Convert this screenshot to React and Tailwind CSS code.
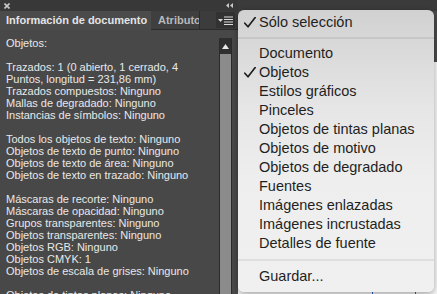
import React from "react";

const lines = [
  "Objetos:",
  "",
  "Trazados: 1 (0 abierto, 1 cerrado, 4",
  "Puntos, longitud = 231,86 mm)",
  "Trazados compuestos: Ninguno",
  "Mallas de degradado: Ninguno",
  "Instancias de símbolos: Ninguno",
  "",
  "Todos los objetos de texto: Ninguno",
  "Objetos de texto de punto: Ninguno",
  "Objetos de texto de área: Ninguno",
  "Objetos de texto en trazado: Ninguno",
  "",
  "Máscaras de recorte: Ninguno",
  "Máscaras de opacidad: Ninguno",
  "Grupos transparentes: Ninguno",
  "Objetos transparentes: Ninguno",
  "Objetos RGB: Ninguno",
  "Objetos CMYK: 1",
  "Objetos de escala de grises: Ninguno",
  "",
  "Objetos de tintas planas: Ninguno",
];

const items = [
  ["Documento", false],
  ["Objetos", true],
  ["Estilos gráficos", false],
  ["Pinceles", false],
  ["Objetos de tintas planas", false],
  ["Objetos de motivo", false],
  ["Objetos de degradado", false],
  ["Fuentes", false],
  ["Imágenes enlazadas", false],
  ["Imágenes incrustadas", false],
  ["Detalles de fuente", false],
];

function Check() {
  return (
    <svg className="absolute left-[6px] top-[4px]" width="12" height="11" viewBox="0 0 12 11">
      <path d="M0.8 6.2 L4 9.8 L11.2 0.6" fill="none" stroke="#1e1e1e" strokeWidth="1.7" strokeLinecap="round" strokeLinejoin="round" />
    </svg>
  );
}

function Item({ label, checked }) {
  return (
    <div className="relative h-[19px] pl-[21px] leading-[19px] whitespace-nowrap">
      {checked && <Check />}
      {label}
    </div>
  );
}

function Sep({ h }) {
  return (
    <div className={`flex items-center ${h}`}>
      <div className="h-[2px] w-full bg-black/[0.07]" />
    </div>
  );
}

export default function App() {
  return (
    <div className="relative flex h-[294px] w-[437px] overflow-hidden bg-[#4a4a4a] font-['Liberation_Sans',Arial,sans-serif]">
      {/* Left panel */}
      <div className="flex w-[238px] shrink-0 flex-col bg-[#484848]">
        <div className="flex h-[11px] items-center justify-between bg-[#383838] pl-[4px] pr-[5px]">
          <svg width="6" height="6" viewBox="0 0 6 6">
            <path d="M0.5 0.5 L5.5 5.5 M5.5 0.5 L0.5 5.5" stroke="#c9c9c9" strokeWidth="1.6" />
          </svg>
          <svg width="7" height="5" viewBox="0 0 7 5">
            <path d="M3 0 L0 2.5 L3 5 Z M7 0 L4 2.5 L7 5 Z" fill="#c9c9c9" />
          </svg>
        </div>
        <div className="flex h-[19px] bg-[#3c3c3c]">
          <div className="flex w-[151px] items-center bg-[#4b4b4b] pl-[6px] text-[11px] font-bold whitespace-nowrap text-[#e4e4e4]">
            Información de documento
          </div>
          <div className="flex w-[49px] items-center overflow-hidden whitespace-nowrap border-r border-b border-[#2c2c2c] bg-[#3f3f3f] pl-[7px] text-[11px] font-bold text-[#b9b9b9]">
            Atributos
          </div>
          <div className="flex flex-1 items-center justify-end border-b border-[#2c2c2c] pr-[3px]">
            <div className="flex h-[16px] w-[19px] items-center justify-center gap-[1px] bg-[#323232]">
              <svg width="5" height="3" viewBox="0 0 5 3">
                <path d="M0 0 L5 0 L2.5 3 Z" fill="#d6d6d6" />
              </svg>
              <svg width="9" height="9" viewBox="0 0 9 9">
                <path d="M0 1 H9 M0 3.5 H9 M0 6 H9 M0 8.5 H9" stroke="#dcdcdc" strokeWidth="1.2" />
              </svg>
            </div>
          </div>
        </div>
        <div className="flex min-h-0 flex-1">
          <div className="flex-1 overflow-hidden pl-[6px] pt-[7px] text-[11px] leading-[12px] text-[#e8e8e8]">
            {lines.map((l, i) => (
              <div key={i} className="h-[12px] whitespace-nowrap">
                {l}
              </div>
            ))}
          </div>
          <div className="flex w-[19px] shrink-0 flex-col pt-[8px]">
            <div className="flex flex-1 flex-col w-[13px] border-l border-r border-[#2b2b2b]">
              <div className="flex h-[16px] items-center justify-center bg-[#2f2f2f]">
                <svg width="7" height="5" viewBox="0 0 7 5">
                  <path d="M3.5 0 L7 5 L0 5 Z" fill="#e8e8e8" />
                </svg>
              </div>
              <div className="flex-1 bg-[#8b8b8b]" />
            </div>
          </div>
        </div>
      </div>

      {/* Canvas behind */}
      <div className="relative flex flex-1 flex-col">
        <div className="h-[11px] bg-[#3b3b3b]" />
        <div className="h-[51px] bg-[#4a4a4a]" />
        <div className="relative flex-1 bg-[#f7f7f7]">
          <div className="absolute left-[134px] top-[220px] h-[20px] w-[1px] bg-[#2a5fd0]" />
          <div className="absolute left-[177px] top-[220px] h-[20px] w-[1px] bg-[#2a5fd0]" />
        </div>
      </div>

      {/* Dropdown menu */}
      <div className="absolute left-[238px] top-[10px] h-[282px] w-[196px] rounded-[6px] bg-[linear-gradient(to_bottom,#d1d1d1,#e6e6e6_35%,#eeeeee_60%,#f0f0f0)] pt-[3px] text-[14.5px] text-[#1f1f1f] shadow-[0_2px_6px_rgba(0,0,0,0.35)]">
        <Item label="Sólo selección" checked />
        <Sep h="h-[12px]" />
        {items.map(([l, c]) => (
          <Item key={l} label={l} checked={c} />
        ))}
        <Sep h="h-[14px]" />
        <Item label="Guardar..." />
      </div>
    </div>
  );
}
